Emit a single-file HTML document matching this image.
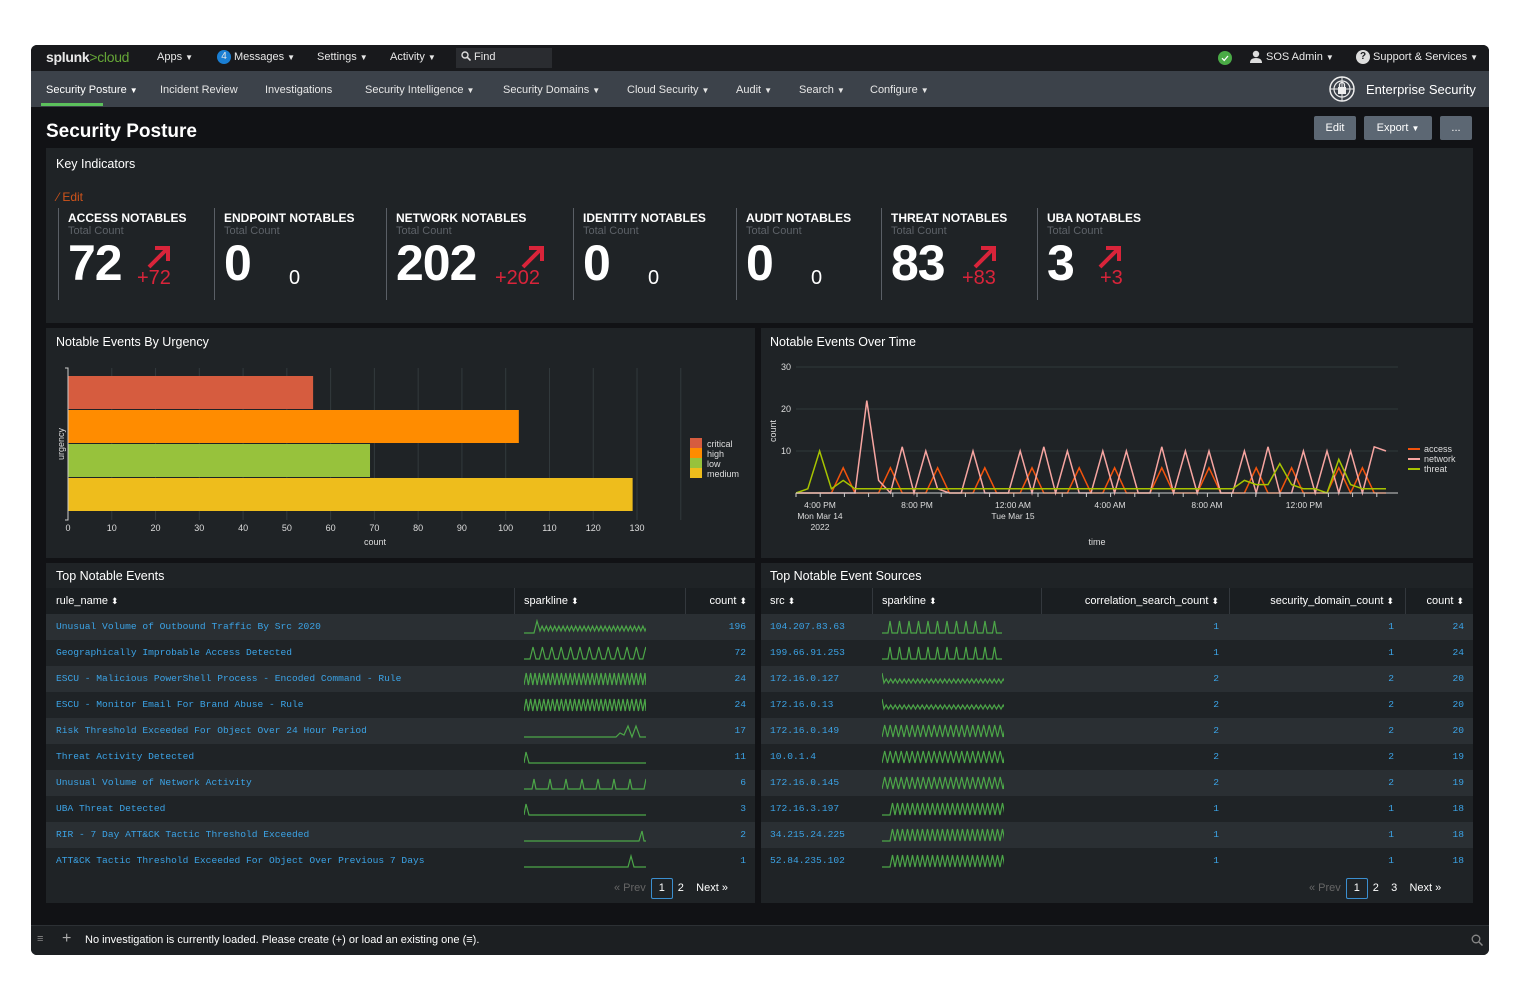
<!DOCTYPE html>
<html><head><meta charset="utf-8">
<style>
*{margin:0;padding:0;box-sizing:border-box}
body{width:1520px;height:1000px;background:#fff;font-family:"Liberation Sans",sans-serif;position:relative;overflow:hidden;color:#fff}
.a{position:absolute}
#win{position:absolute;left:31px;top:45px;width:1458px;height:910px;background:#111215;border-radius:6px;overflow:hidden}
#top{position:absolute;left:0;top:0;width:100%;height:26px;background:#18191c;font-size:11px;color:#e8e8e8}
#nav{position:absolute;left:0;top:26px;width:100%;height:36px;background:#3c424a;font-size:11px;color:#e6e6e6}
.car{font-size:8px;margin-left:3px}
.panel{position:absolute;background:#1f2326}
.ttl{position:absolute;font-size:12.5px;color:#fff}
.kl{position:absolute;font-size:12px;font-weight:bold;color:#fff;top:211px}
.ks{position:absolute;font-size:11px;color:#5d6268;top:225px}
.kn{position:absolute;font-size:50px;font-weight:bold;color:#fff;top:234px;letter-spacing:-1px}
.kd{position:absolute;font-size:20px;color:#d9243a;top:267px}
.kz{position:absolute;font-size:20px;color:#fff;top:267px}
.kar{position:absolute;top:244px}
.dv{position:absolute;width:1px;background:#5a5f66;top:208px;height:92px}
.btn{position:absolute;background:#5c6773;border-radius:2px;font-size:11px;color:#fff;text-align:center;line-height:24px;top:116px;height:24px}
.row{position:absolute;height:26px;font-family:"Liberation Mono",monospace;font-size:9.6px;color:#3ba3e6;line-height:26px}
.hd{position:absolute;font-size:11px;color:#fff;top:595px}
.vd{position:absolute;width:1px;background:#33383d;top:588px;height:26px}
</style></head><body>
<div id="win">
<div id="top">
 <div class="a" style="left:15px;top:4px;font-size:14px;font-weight:bold;letter-spacing:-0.3px">splunk<span style="color:#65a637;font-weight:normal">&gt;cloud</span></div>
 <div class="a" style="left:126px;top:6px">Apps<span class="car">▼</span></div>
 <div class="a" style="left:186px;top:5px;width:14px;height:14px;border-radius:7px;background:#1a7fd4;text-align:center;line-height:14px;font-size:10px">4</div>
 <div class="a" style="left:203px;top:6px">Messages<span class="car">▼</span></div>
 <div class="a" style="left:286px;top:6px">Settings<span class="car">▼</span></div>
 <div class="a" style="left:359px;top:6px">Activity<span class="car">▼</span></div>
 <div class="a" style="left:425px;top:3px;width:96px;height:20px;background:#2a2c30;padding:3px 0 0 5px"><svg width="10" height="10" style="vertical-align:-1px"><circle cx="4" cy="4" r="3" fill="none" stroke="#ddd" stroke-width="1.4"/><line x1="6.2" y1="6.2" x2="9.5" y2="9.5" stroke="#ddd" stroke-width="1.6"/></svg> Find</div>
 <svg class="a" style="left:1187px;top:6px" width="14" height="14"><circle cx="7" cy="7" r="7" fill="#4aab46"/><path d="M4 7.2 L6.2 9.4 L10 5" fill="none" stroke="#fff" stroke-width="1.3"/></svg>
 <div class="a" style="left:1218px;top:5px"><svg width="14" height="14"><circle cx="7" cy="4" r="3.2" fill="#ddd"/><path d="M1 13 Q1 8 7 8 Q13 8 13 13Z" fill="#ddd"/></svg></div>
 <div class="a" style="left:1235px;top:6px">SOS Admin<span class="car">▼</span></div>
 <div class="a" style="left:1325px;top:5px;width:14px;height:14px;border-radius:7px;background:#ddd;color:#18191c;font-size:10px;font-weight:bold;text-align:center;line-height:14px">?</div>
 <div class="a" style="left:1342px;top:6px">Support &amp; Services<span class="car">▼</span></div>
</div>
<div id="nav">
 <div class="a" style="left:15px;top:13px;color:#fff">Security Posture<span class="car">▼</span></div>
 <div class="a" style="left:10px;top:32px;width:62px;height:3px;background:#5cc05c"></div>
 <div class="a" style="left:129px;top:13px">Incident Review</div>
 <div class="a" style="left:234px;top:13px">Investigations</div>
 <div class="a" style="left:334px;top:13px">Security Intelligence<span class="car">▼</span></div>
 <div class="a" style="left:472px;top:13px">Security Domains<span class="car">▼</span></div>
 <div class="a" style="left:596px;top:13px">Cloud Security<span class="car">▼</span></div>
 <div class="a" style="left:705px;top:13px">Audit<span class="car">▼</span></div>
 <div class="a" style="left:768px;top:13px">Search<span class="car">▼</span></div>
 <div class="a" style="left:839px;top:13px">Configure<span class="car">▼</span></div>
 <svg class="a" style="left:1297px;top:4px" width="28" height="28"><circle cx="14" cy="14" r="12" fill="none" stroke="#eee" stroke-width="1.5"/><circle cx="14" cy="14" r="8" fill="none" stroke="#eee" stroke-width="1.2"/><line x1="2" y1="14" x2="26" y2="14" stroke="#eee"/><line x1="14" y1="2" x2="14" y2="26" stroke="#eee"/><rect x="10" y="12" width="8" height="7" fill="#eee"/><path d="M11.5 12 V10 a2.5 2.5 0 0 1 5 0 V12" fill="none" stroke="#eee" stroke-width="1.3"/></svg>
 <div class="a" style="left:1335px;top:11px;font-size:13px;color:#fff">Enterprise Security</div>
</div>
</div>

<div class="a" style="left:46px;top:121px;font-size:19px;font-weight:bold">Security Posture</div>
<div class="btn" style="left:1314px;width:42px">Edit</div>
<div class="btn" style="left:1364px;width:68px">Export <span style="font-size:8px">▼</span></div>
<div class="btn" style="left:1440px;width:32px">...</div>

<div class="panel" style="left:46px;top:148px;width:1427px;height:175px"></div>
<div class="ttl" style="left:56px;top:157px">Key Indicators</div>
<div class="a" style="left:57px;top:190px;font-size:12px;color:#d0541b">⁄ Edit</div>

<div class="dv" style="left:58px"></div><div class="dv" style="left:214px"></div><div class="dv" style="left:386px"></div><div class="dv" style="left:573px"></div><div class="dv" style="left:736px"></div><div class="dv" style="left:881px"></div><div class="dv" style="left:1037px"></div>

<div class="kl" style="left:68px">ACCESS NOTABLES</div><div class="ks" style="left:68px">Total Count</div><div class="kn" style="left:68px">72</div>
<svg class="kar" style="left:146px" width="26" height="26"><path d="M3 23 L21 5 M9 4 H22 V17" fill="none" stroke="#d9243a" stroke-width="4"/></svg><div class="kd" style="left:137px">+72</div>
<div class="kl" style="left:224px">ENDPOINT NOTABLES</div><div class="ks" style="left:224px">Total Count</div><div class="kn" style="left:224px">0</div><div class="kz" style="left:289px">0</div>
<div class="kl" style="left:396px">NETWORK NOTABLES</div><div class="ks" style="left:396px">Total Count</div><div class="kn" style="left:396px">202</div>
<svg class="kar" style="left:520px" width="26" height="26"><path d="M3 23 L21 5 M9 4 H22 V17" fill="none" stroke="#d9243a" stroke-width="4"/></svg><div class="kd" style="left:495px">+202</div>
<div class="kl" style="left:583px">IDENTITY NOTABLES</div><div class="ks" style="left:583px">Total Count</div><div class="kn" style="left:583px">0</div><div class="kz" style="left:648px">0</div>
<div class="kl" style="left:746px">AUDIT NOTABLES</div><div class="ks" style="left:746px">Total Count</div><div class="kn" style="left:746px">0</div><div class="kz" style="left:811px">0</div>
<div class="kl" style="left:891px">THREAT NOTABLES</div><div class="ks" style="left:891px">Total Count</div><div class="kn" style="left:891px">83</div>
<svg class="kar" style="left:972px" width="26" height="26"><path d="M3 23 L21 5 M9 4 H22 V17" fill="none" stroke="#d9243a" stroke-width="4"/></svg><div class="kd" style="left:962px">+83</div>
<div class="kl" style="left:1047px">UBA NOTABLES</div><div class="ks" style="left:1047px">Total Count</div><div class="kn" style="left:1047px">3</div>
<svg class="kar" style="left:1097px" width="26" height="26"><path d="M3 23 L21 5 M9 4 H22 V17" fill="none" stroke="#d9243a" stroke-width="4"/></svg><div class="kd" style="left:1100px">+3</div>

<div class="panel" style="left:46px;top:328px;width:709px;height:230px"></div>
<div class="ttl" style="left:56px;top:335px">Notable Events By Urgency</div>
<svg class="a" style="left:46px;top:328px" width="709" height="230" id="bar"></svg>

<div class="panel" style="left:761px;top:328px;width:712px;height:230px"></div>
<div class="ttl" style="left:770px;top:335px">Notable Events Over Time</div>
<svg class="a" style="left:761px;top:328px" width="712" height="230" id="line"></svg>

<div class="panel" style="left:46px;top:563px;width:709px;height:340px"></div>
<div class="ttl" style="left:56px;top:569px">Top Notable Events</div>
<div class="panel" style="left:761px;top:563px;width:712px;height:340px"></div>
<div class="ttl" style="left:770px;top:569px">Top Notable Event Sources</div>
<div id="tables"></div>

<div class="a" style="left:31px;top:925px;width:1458px;height:30px;background:#1c1f22;border-top:1px solid #2c3034;border-radius:0 0 6px 6px"></div>
<div class="a" style="left:37px;top:933px;font-size:11px;color:#888">≡</div>
<div class="a" style="left:62px;top:930px;font-size:16px;color:#aaa">+</div>
<div class="a" style="left:85px;top:934px;font-size:11px;color:#fff">No investigation is currently loaded. Please create (+) or load an existing one (≡).</div>
<svg class="a" style="left:1471px;top:934px" width="12" height="12"><circle cx="5" cy="5" r="3.8" fill="none" stroke="#888" stroke-width="1.3"/><line x1="8" y1="8" x2="11.5" y2="11.5" stroke="#888" stroke-width="1.5"/></svg>

<script>
var NS='http://www.w3.org/2000/svg';
function el(p,t,a,txt){var e=document.createElementNS(NS,t);for(var k in a)e.setAttribute(k,a[k]);if(txt!=null)e.textContent=txt;p.appendChild(e);return e;}
var b=document.getElementById('bar');
var x0=22,ppu=4.377;
for(var i=1;i<=14;i++){el(b,'line',{x1:x0+i*10*ppu,y1:40,x2:x0+i*10*ppu,y2:192,stroke:'#323a3d','stroke-width':1});}
var bars=[[56,48,'#d65c3f'],[103,82,'#ff8c00'],[69,116,'#97c23c'],[129,150,'#eebd1c']];
bars.forEach(function(d){el(b,'rect',{x:x0,y:d[1],width:d[0]*ppu,height:33,fill:d[2]});});
el(b,'path',{d:'M19 40 H22 V192 H19',stroke:'#ccc',fill:'none'});
for(var i=0;i<=13;i++){el(b,'text',{x:x0+i*10*ppu,y:203,'font-size':9,fill:'#ddd','text-anchor':'middle','font-family':'Liberation Sans'},i*10);}
el(b,'text',{x:329,y:217,'font-size':9,fill:'#ddd','text-anchor':'middle','font-family':'Liberation Sans'},'count');
el(b,'text',{x:0,y:0,'font-size':9,fill:'#ddd','text-anchor':'middle',transform:'translate(18,116) rotate(-90)','font-family':'Liberation Sans'},'urgency');
var lg=[['critical','#d65c3f'],['high','#ff8c00'],['low','#97c23c'],['medium','#eebd1c']];
lg.forEach(function(d,i){el(b,'rect',{x:644,y:110+i*10,width:12,height:10,fill:d[1]});el(b,'text',{x:661,y:119+i*10,'font-size':9,fill:'#ddd','font-family':'Liberation Sans'},d[0]);});

var L=document.getElementById('line');
var ys=function(v){return 165-v*4.2;};
[10,20,30].forEach(function(v){el(L,'line',{x1:35,y1:ys(v),x2:637,y2:ys(v),stroke:'#2f383b'});el(L,'text',{x:30,y:ys(v)+3,'font-size':9,fill:'#ddd','text-anchor':'end','font-family':'Liberation Sans'},v);});
el(L,'text',{x:0,y:0,'font-size':9,fill:'#ddd','text-anchor':'middle',transform:'translate(15,103) rotate(-90)','font-family':'Liberation Sans'},'count');
var N=51,xs=function(i){return 35+i*11.8;};
var net=[],acc=[],thr=[];
for(var i=0;i<N;i++){net.push(0);acc.push(0);thr.push(1);}
[6,9,11,15,19,21,23,26,28,31,33,35,38,40,43,45,47,49].forEach(function(i,k){net[i]=(i==6?22:(k%4==1?11:10));});
net[7]=3;net[8]=0;net[12]=1;net[13]=0;net[50]=10;
[4,8,12,16,20,24,27,31,35,39,42,46,48].forEach(function(i){acc[i]=6;});
thr[0]=0;thr[2]=10;thr[3]=1;thr[4]=3;thr[38]=3;thr[39]=2;thr[40]=2;thr[41]=7;thr[42]=2;thr[43]=1;thr[44]=1;thr[45]=0;thr[46]=8;thr[47]=2;thr[48]=1;thr[49]=1;
function pl(a,c){el(L,'polyline',{points:a.map(function(v,i){return xs(i)+','+ys(v);}).join(' '),fill:'none',stroke:c,'stroke-width':1.5});}
pl(acc,'#f1530d');pl(net,'#f7a5a1');pl(thr,'#a7c400');
el(L,'line',{x1:35,y1:165,x2:637,y2:165,stroke:'#ccc'});
var tk=[[59,'4:00 PM','Mon Mar 14','2022'],[156,'8:00 PM'],[252,'12:00 AM','Tue Mar 15'],[349,'4:00 AM'],[446,'8:00 AM'],[543,'12:00 PM']];
for(var t=35;t<=637;t+=24.2){el(L,'line',{x1:t,y1:165,x2:t,y2:169,stroke:'#ccc'});}
tk.forEach(function(d){for(var j=1;j<d.length;j++)el(L,'text',{x:d[0],y:180+(j-1)*11,'font-size':8.5,fill:'#ddd','text-anchor':'middle','font-family':'Liberation Sans'},d[j]);});
el(L,'text',{x:336,y:217,'font-size':9,fill:'#ddd','text-anchor':'middle','font-family':'Liberation Sans'},'time');
[['access','#f1530d'],['network','#f7a5a1'],['threat','#a7c400']].forEach(function(d,i){el(L,'line',{x1:647,y1:121+i*10,x2:659,y2:121+i*10,stroke:d[1],'stroke-width':2});el(L,'text',{x:663,y:124+i*10,'font-size':9,fill:'#ddd','font-family':'Liberation Sans'},d[0]);});

function spark(type){
 var w=122,h=16,p=[];
 function add(x,y){p.push(x.toFixed(1)+','+y.toFixed(1));}
 if(type=='out'){add(0,14);add(10,14);add(13,2);add(16,12);for(var x=16;x<=122;x+=4.2){add(x,12);add(x+2.1,7);}}
 else if(type=='geo'){add(0,14);for(var x=6;x<122;x+=9.4){add(x,14);add(x+3,2);add(x+6,14);}}
 else if(type=='zig'){for(var x=0;x<=121;x+=4.4){add(x,14);add(x+2.2,2);}add(122,14);}
 else if(type=='late'){add(0,14);add(92,14);add(96,10);add(100,12);add(104,3);add(108,14);add(112,3);add(116,14);add(122,14);}
 else if(type=='first'){add(0,14);add(2,3);add(5,14);add(122,14);}
 else if(type=='per'){add(0,14);for(var x=8;x<122;x+=16){add(x,14);add(x+2,4);add(x+4,14);}add(122,14);}
 else if(type=='end'){add(0,14);add(115,14);add(118,4);add(120,14);add(122,14);}
 else if(type=='end2'){add(0,14);add(104,14);add(107,3);add(110,14);add(122,14);}
 else if(type=='src1'){add(0,14);add(6,14);for(var x=6;x<120;x+=9.5){add(x+2,2);add(x+4,14);add(x+9.5,14);}}
 else if(type=='src2'){add(0,2);add(2,12);for(var x=2;x<122;x+=4.5){add(x+2.2,8);add(x+4.5,12);}}
 else if(type=='src3'){for(var x=0;x<=121;x+=5.5){add(x,14);add(x+2.7,2);}add(122,14);}
 else if(type=='src4'){add(0,14);add(8,14);for(var x=8;x<=121;x+=5){add(x+2.5,2);add(x+5,14);}}
 return '<svg width="'+w+'" height="'+h+'" style="position:absolute;top:5px"><polyline points="'+p.join(' ')+'" fill="none" stroke="#4ca648" stroke-width="1.2"/></svg>';
}
var T=document.getElementById('tables'),html='';
function hd(x,t,al){html+='<div class="hd" style="'+(al?'right:'+(1520-x)+'px':'left:'+x+'px')+'">'+t+' <span style="font-size:9px">⬍</span></div>';}
function vd(x){html+='<div class="vd" style="left:'+x+'px"></div>';}
html+='<div class="a" style="left:46px;top:588px;width:709px;height:26px;background:#1a1e21"></div>';
html+='<div class="a" style="left:761px;top:588px;width:712px;height:26px;background:#1a1e21"></div>';
hd(56,'rule_name');hd(524,'sparkline');hd(747,'count',1);vd(514);vd(685);
hd(770,'src');hd(882,'sparkline');hd(1219,'correlation_search_count',1);hd(1394,'security_domain_count',1);hd(1464,'count',1);vd(872);vd(1041);vd(1229);vd(1405);
var L1=[['Unusual Volume of Outbound Traffic By Src 2020','out',196],['Geographically Improbable Access Detected','geo',72],['ESCU - Malicious PowerShell Process - Encoded Command - Rule','zig',24],['ESCU - Monitor Email For Brand Abuse - Rule','zig',24],['Risk Threshold Exceeded For Object Over 24 Hour Period','late',17],['Threat Activity Detected','first',11],['Unusual Volume of Network Activity','per',6],['UBA Threat Detected','first',3],['RIR - 7 Day ATT&amp;CK Tactic Threshold Exceeded','end',2],['ATT&amp;CK Tactic Threshold Exceeded For Object Over Previous 7 Days','end2',1]];
var L2=[['104.207.83.63','src1',1,1,24],['199.66.91.253','src1',1,1,24],['172.16.0.127','src2',2,2,20],['172.16.0.13','src2',2,2,20],['172.16.0.149','src3',2,2,20],['10.0.1.4','src3',2,2,19],['172.16.0.145','src3',2,2,19],['172.16.3.197','src4',1,1,18],['34.215.24.225','src4',1,1,18],['52.84.235.102','src4',1,1,18]];
for(var i=0;i<10;i++){
 var y=614+i*26,bg=i%2==0?'#2a2f33':'#1f2326';
 html+='<div class="row" style="left:46px;top:'+y+'px;width:709px;background:'+bg+'"><span class="a" style="left:10px">'+L1[i][0]+'</span><span class="a" style="left:478px;top:0">'+spark(L1[i][1])+'</span><span class="a" style="right:9px">'+L1[i][2]+'</span></div>';
 html+='<div class="row" style="left:761px;top:'+y+'px;width:712px;background:'+bg+'"><span class="a" style="left:9px">'+L2[i][0]+'</span><span class="a" style="left:121px;top:0">'+spark(L2[i][1])+'</span><span class="a" style="right:254px">'+L2[i][2]+'</span><span class="a" style="right:79px">'+L2[i][3]+'</span><span class="a" style="right:9px">'+L2[i][4]+'</span></div>';
}
function pg(x,items){html+='<div class="a" style="left:'+x+'px;top:878px;font-size:11px;color:#fff;white-space:nowrap">'+items+'</div>';}
var one='<span style="display:inline-block;border:1px solid #3b8fd0;border-radius:2px;width:22px;height:21px;text-align:center;line-height:19px;margin:0 5px">1</span>';
pg(614,'<span style="color:#666">« Prev</span>'+one+'2 &nbsp;&nbsp;&nbsp;Next »');
pg(1309,'<span style="color:#666">« Prev</span>'+one+'2 &nbsp;&nbsp;&nbsp;3 &nbsp;&nbsp;&nbsp;Next »');
T.innerHTML=html;
</script>
</body></html>
